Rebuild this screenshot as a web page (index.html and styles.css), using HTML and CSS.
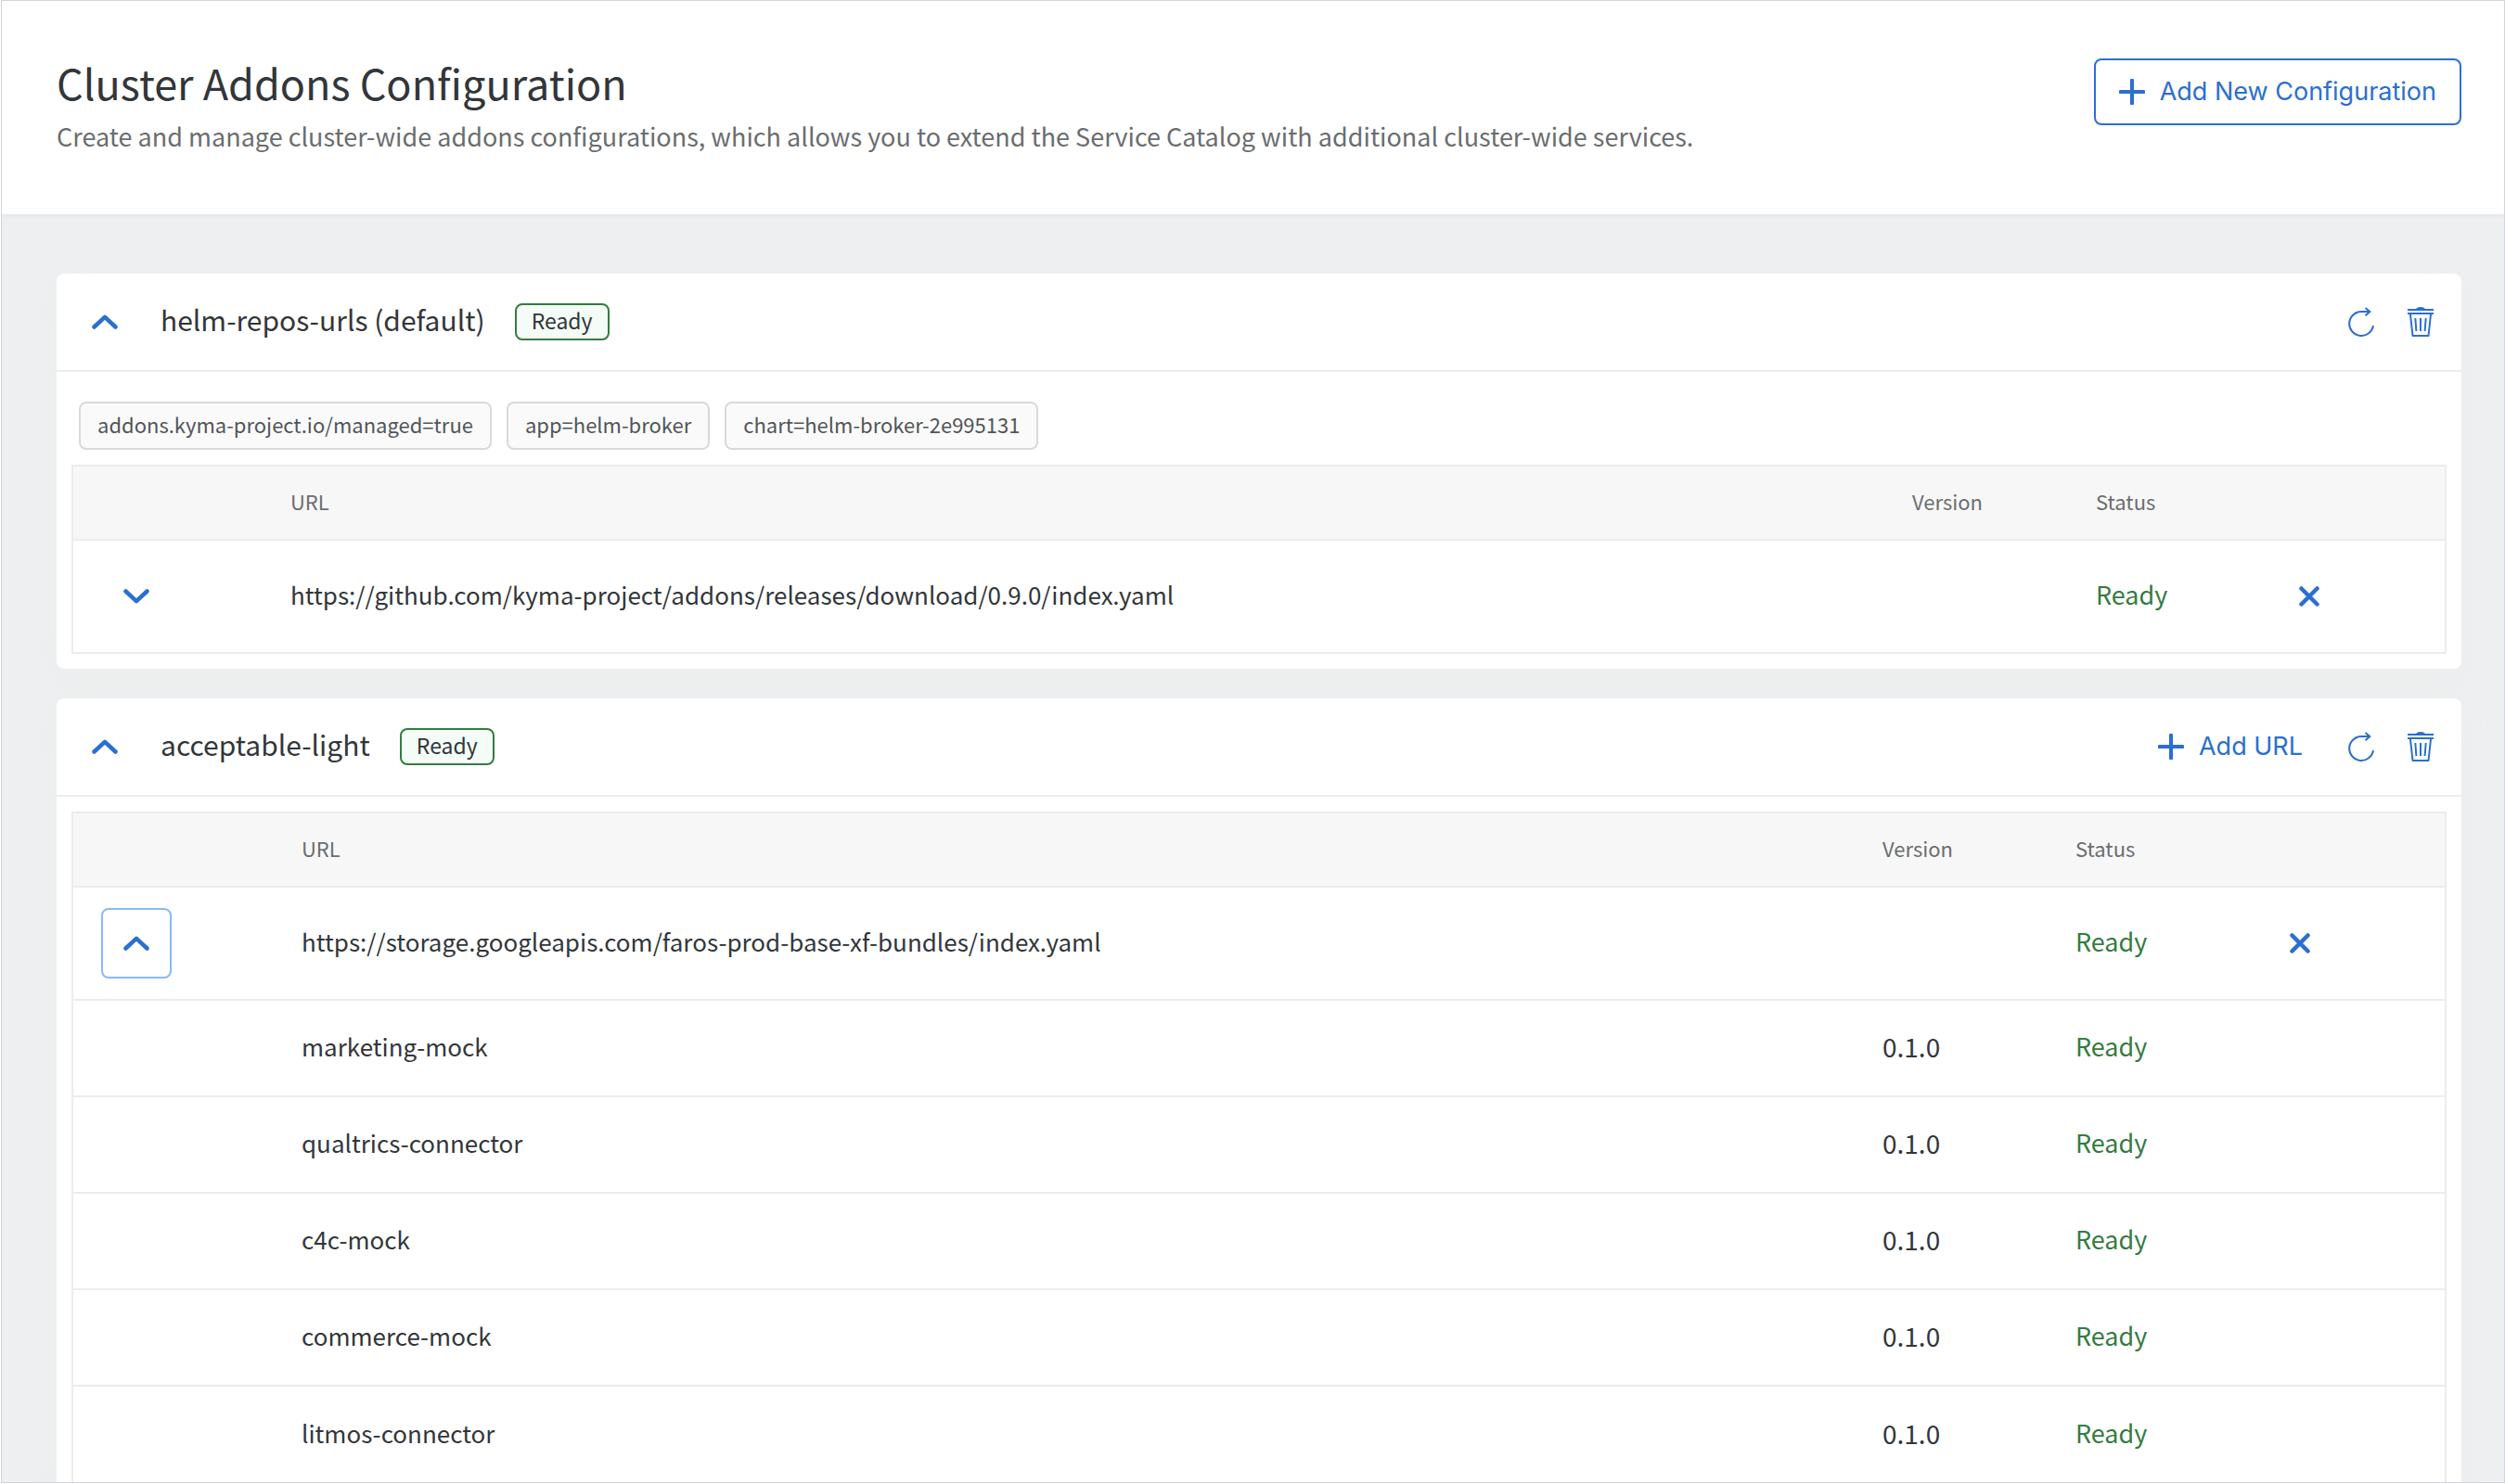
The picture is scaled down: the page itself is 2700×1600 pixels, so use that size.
FILE: index.html
```html
<!DOCTYPE html>
<html lang="en">
<head>
<meta charset="utf-8">
<title>Cluster Addons Configuration</title>
<link rel="stylesheet" href="styles.css">
</head>
<body>
<svg class="sprite" aria-hidden="true">
  <symbol id="plus" viewBox="0 0 28 28"><path d="M14 1.500v25M1.500 14h25" fill="none" stroke="currentColor" stroke-width="4" stroke-linecap="round"/></symbol>
  <symbol id="up" viewBox="0 0 28 16"><path d="M2.500 13.500 14 2.800 25.500 13.500" fill="none" stroke="currentColor" stroke-width="4.500" stroke-linecap="round" stroke-linejoin="round"/></symbol>
  <symbol id="down" viewBox="0 0 28 16"><path d="M2.500 2.500 14 13.200 25.500 2.500" fill="none" stroke="currentColor" stroke-width="4.500" stroke-linecap="round" stroke-linejoin="round"/></symbol>
  <symbol id="cross" viewBox="0 0 22 22"><path d="M2.500 2.500l17 17M19.500 2.500l-17 17" fill="none" stroke="currentColor" stroke-width="4.500" stroke-linecap="round"/></symbol>
  <symbol id="refresh" viewBox="0 0 28 32"><path d="M27 20A13 13 0 1 1 14 5H23M18.500 1 23.300 5 18.500 9.300" fill="none" stroke="currentColor" stroke-width="2"/></symbol>
  <symbol id="trash" viewBox="0 0 28 32"><path d="M9 2.500Q9.500 0 14 0T19 2.500Z" fill="currentColor"/><path d="M0 3H28M0 7H28M3 8 5.500 31H22.500L25 8M8.300 12 9.400 26M14 12V26M19.700 12 18.600 26" fill="none" stroke="currentColor" stroke-width="2" stroke-linejoin="round"/></symbol>
</svg>
<div class="app">
  <header class="page-header">
    <div>
      <h1>Cluster Addons Configuration</h1>
      <p>Create and manage cluster-wide addons configurations, which allows you to extend the Service Catalog with additional cluster-wide services.</p>
    </div>
    <button class="button button-outline" type="button"><svg class="icon-plus"><use href="#plus"/></svg>Add New Configuration</button>
  </header>
  <main>
    <section class="card">
      <header class="card-header">
        <button class="toggle" type="button" aria-label="Collapse"><svg class="icon-chevron"><use href="#up"/></svg></button>
        <h2>helm-repos-urls (default)</h2>
        <span class="badge">Ready</span>
        <div class="actions">
          <button class="icon-button" type="button" aria-label="Refresh"><svg class="icon-action"><use href="#refresh"/></svg></button>
          <button class="icon-button" type="button" aria-label="Delete"><svg class="icon-action"><use href="#trash"/></svg></button>
        </div>
      </header>
      <div class="card-body">
        <ul class="labels">
          <li>addons.kyma-project.io/managed=true</li>
          <li>app=helm-broker</li>
          <li>chart=helm-broker-2e995131</li>
        </ul>
        <table class="urls urls-default">
          <colgroup><col class="col-toggle"><col><col class="col-version"><col class="col-status"><col class="col-remove"></colgroup>
          <thead><tr><th></th><th>URL</th><th>Version</th><th>Status</th><th></th></tr></thead>
          <tbody>
            <tr class="repo">
              <td><button class="toggle" type="button" aria-label="Expand"><svg class="icon-chevron"><use href="#down"/></svg></button></td>
              <td>https://github.com/kyma-project/addons/releases/download/0.9.0/index.yaml</td>
              <td></td>
              <td class="status">Ready</td>
              <td><button class="toggle" type="button" aria-label="Remove URL"><svg class="icon-cross"><use href="#cross"/></svg></button></td>
            </tr>
          </tbody>
        </table>
      </div>
    </section>

    <section class="card">
      <header class="card-header">
        <button class="toggle" type="button" aria-label="Collapse"><svg class="icon-chevron"><use href="#up"/></svg></button>
        <h2>acceptable-light</h2>
        <span class="badge">Ready</span>
        <div class="actions">
          <button class="button button-add" type="button"><svg class="icon-plus"><use href="#plus"/></svg>Add URL</button>
          <button class="icon-button" type="button" aria-label="Refresh"><svg class="icon-action"><use href="#refresh"/></svg></button>
          <button class="icon-button" type="button" aria-label="Delete"><svg class="icon-action"><use href="#trash"/></svg></button>
        </div>
      </header>
      <div class="card-body">
        <table class="urls urls-expanded">
          <colgroup><col class="col-toggle"><col><col class="col-version"><col class="col-status"><col class="col-remove"></colgroup>
          <thead><tr><th></th><th>URL</th><th>Version</th><th>Status</th><th></th></tr></thead>
          <tbody>
            <tr class="repo">
              <td><button class="toggle toggle-focus" type="button" aria-label="Collapse"><svg class="icon-chevron"><use href="#up"/></svg></button></td>
              <td>https://storage.googleapis.com/faros-prod-base-xf-bundles/index.yaml</td>
              <td></td>
              <td class="status">Ready</td>
              <td><button class="toggle" type="button" aria-label="Remove URL"><svg class="icon-cross"><use href="#cross"/></svg></button></td>
            </tr>
            <tr><td></td><td>marketing-mock</td><td class="version">0.1.0</td><td class="status">Ready</td><td></td></tr>
            <tr><td></td><td>qualtrics-connector</td><td class="version">0.1.0</td><td class="status">Ready</td><td></td></tr>
            <tr><td></td><td>c4c-mock</td><td class="version">0.1.0</td><td class="status">Ready</td><td></td></tr>
            <tr><td></td><td>commerce-mock</td><td class="version">0.1.0</td><td class="status">Ready</td><td></td></tr>
            <tr><td></td><td>litmos-connector</td><td class="version">0.1.0</td><td class="status">Ready</td><td></td></tr>
          </tbody>
        </table>
      </div>
    </section>
  </main>
</div>
</body>
</html>
```
FILE: styles.css
```css
*, *::before, *::after { box-sizing: border-box; }

:root {
  --blue: #2b6fd0;
  --text: #32363a;
  --muted: #6a6d70;
  --green: #357b3f;
  --line: #ececec;
}

body {
  margin: 0;
  background: #fff;
  color: var(--text);
  font: 26px/40px "Noto Sans CJK SC", "Open Sans", sans-serif;
}

h1, h2, p, ul { margin: 0; padding: 0; font-weight: 400; }

button {
  margin: 0;
  padding: 0;
  border: 0;
  background: none;
  color: var(--blue);
  cursor: pointer;
}

.sprite { display: none; }
.icon-plus { width: 28px; height: 28px; }
.icon-chevron { width: 28px; height: 16px; }
.icon-cross { width: 22px; height: 22px; }
.icon-action { width: 28px; height: 32px; }

/* Shell */
.app {
  display: flex;
  flex-direction: column;
  height: calc(100vh - 1px);
  margin-left: 1px;
  border: 1px solid #d1d4d9;
  background: #edeff0;
  overflow: hidden;
}

.page-header {
  display: flex;
  flex: none;
  justify-content: space-between;
  align-items: flex-start;
  padding: 58px 46px 64px 59px;
  background: #fff;
  box-shadow: 0 2px 6px rgba(0, 0, 0, .05);
}
.page-header h1 { margin-bottom: 8px; font-size: 45px; line-height: 60px; }
.page-header p { color: var(--muted); font-size: 27px; }

.button {
  display: flex;
  align-items: center;
  gap: 16px;
  height: 72px;
  padding: 0 25px;
  font: 27px/36px Inter, sans-serif;
}
.button-outline {
  margin-top: 4px;
  border: 2px solid var(--blue);
  border-radius: 8px;
}
.button-add { margin-right: 6px; }

main {
  display: flex;
  flex: 1;
  flex-direction: column;
  gap: 32px;
  min-height: 0;
  padding: 64px 46px 0 59px;
}

/* Cards */
.card {
  flex: none;
  border-radius: 8px;
  background: #fff;
  box-shadow: 0 10px 40px #eee;
}
.card-header {
  display: flex;
  align-items: center;
  height: 106px;
  padding: 0 12px 0 14px;
  border-bottom: 2px solid var(--line);
}
.card-header h2 {
  margin: 0 32px 0 22px;
  padding-bottom: 6px;
  font-size: 30px;
}
.badge {
  height: 40px;
  padding: 0 16px;
  border: 2px solid var(--green);
  border-radius: 8px;
  background: #f3fcf6;
  font-size: 23px;
  line-height: 32px;
}
.actions { display: flex; align-items: center; margin-left: auto; }
.icon-button {
  display: flex;
  justify-content: center;
  align-items: center;
  width: 64px;
  height: 64px;
}
.card-body { padding: 16px; }

.toggle {
  display: flex;
  justify-content: center;
  align-items: center;
  width: 76px;
  height: 76px;
  border: 2px solid transparent;
  border-radius: 8px;
}
.toggle-focus { border-color: #89b9f5; }

.labels {
  display: flex;
  gap: 16px;
  padding: 16px 8px;
  list-style: none;
}
.labels li {
  height: 52px;
  padding: 0 18px;
  border: 2px solid #d9d9d9;
  border-radius: 8px;
  background: #fafafa;
  color: #515559;
  font-size: 22px;
  line-height: 44px;
}

/* URL tables */
.urls {
  width: 100%;
  table-layout: fixed;
  border: 2px solid var(--line);
  border-spacing: 0;
}
.urls-default .col-toggle { width: 204px; }
.urls-default .col-version { width: 198px; }
.urls-default .col-status { width: 192px; }
.urls-default .col-remove { width: 214px; }
.urls-expanded .col-toggle { width: 216px; }
.urls-expanded .col-version { width: 208px; }
.urls-expanded .col-status { width: 204px; }
.urls-expanded .col-remove { width: 224px; }

.urls th,
.urls td {
  height: 104px;
  padding: 0 0 5px 30px;
  border-bottom: 2px solid var(--line);
  text-align: left;
  vertical-align: middle;
}
.urls th {
  height: 80px;
  background: #f7f7f7;
  color: var(--muted);
  font-size: 22px;
  font-weight: 400;
}
.urls .repo td { height: 122px; }
.urls .repo td:first-child,
.urls .repo td:last-child { padding-bottom: 0; }
.urls tbody tr:last-child td { border-bottom: 0; }
.urls-default .repo td { height: 120px; }
.urls td.version { font-size: 28px; }
.urls td.status { color: var(--green); font-size: 27px; }
```
